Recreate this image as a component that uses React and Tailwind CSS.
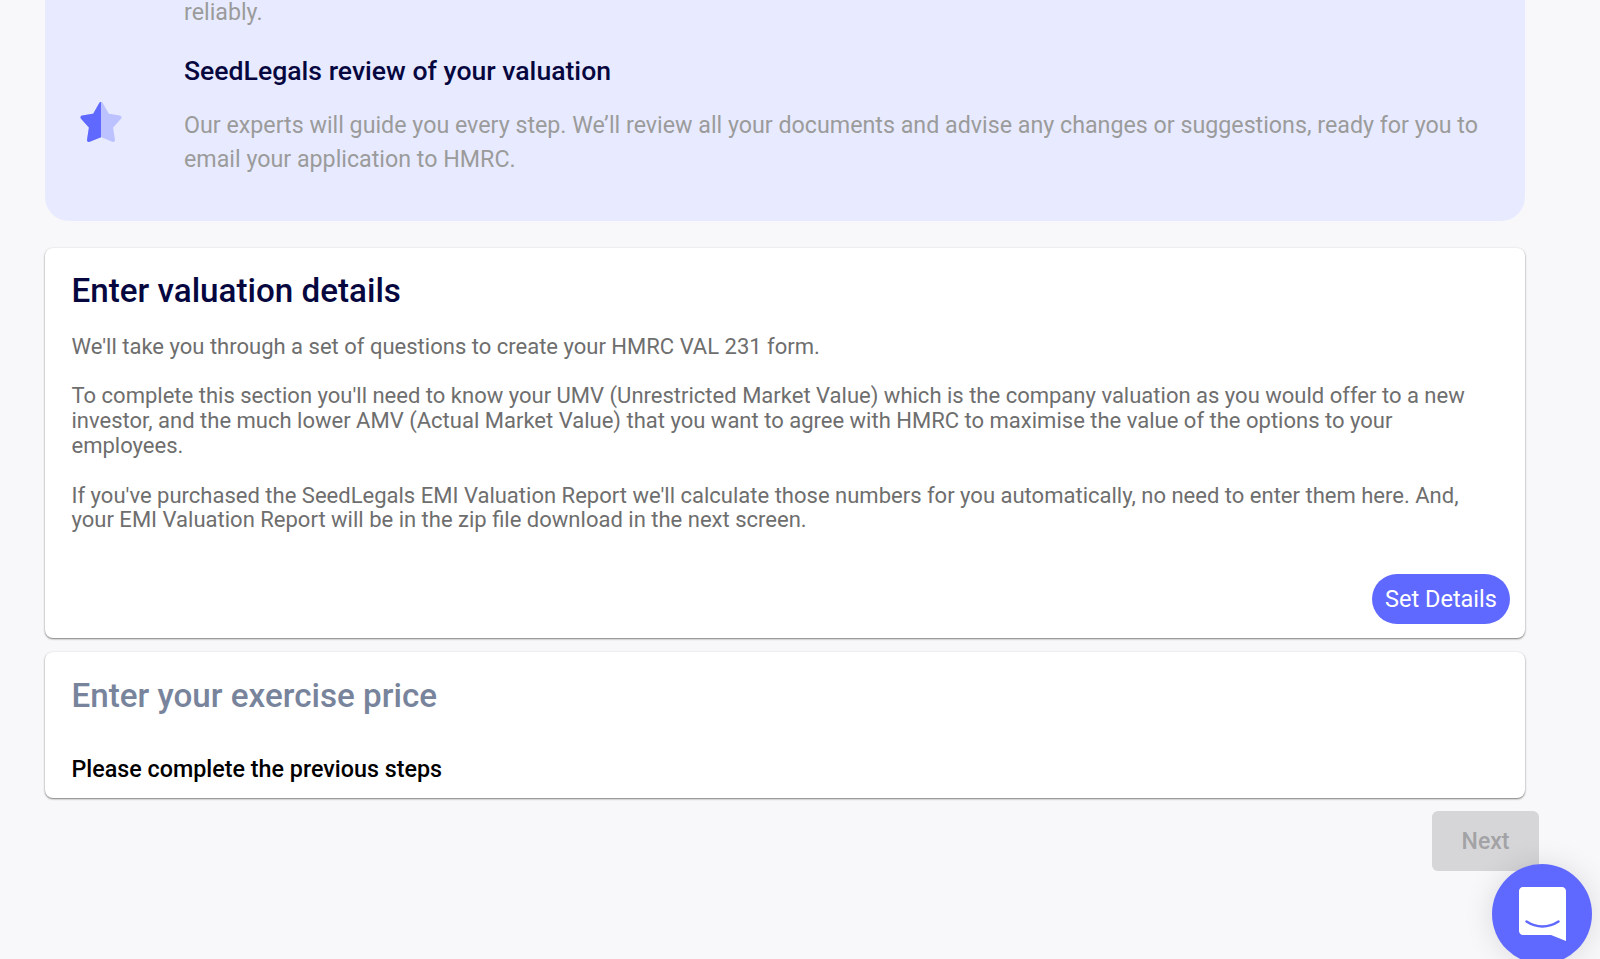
import React from 'react';

const STAR = 'M21 2L14.500 13.500L2.500 15.500L11 25L9 38L21 33L33 38L31 25L39.500 15.500L27.500 13.500Z';

function StarIcon() {
  return (
    <svg width="42" height="42" viewBox="0 0 42 42">
      <defs>
        <clipPath id="star-left"><rect x="0" y="0" width="21" height="42" /></clipPath>
      </defs>
      <path d={STAR} fill="#bcc1ff" stroke="#bcc1ff" strokeWidth="4" strokeLinejoin="round" />
      <path d={STAR} fill="#6069ff" stroke="#6069ff" strokeWidth="4" strokeLinejoin="round" clipPath="url(#star-left)" />
    </svg>
  );
}

function ChatIcon() {
  return (
    <svg width="47" height="54" viewBox="0 0 47 54">
      <path d="M4 0h39c2.200 0 4 1.800 4 4v50l-15-6H4c-2.200 0-4-1.800-4-4V4c0-2.200 1.800-4 4-4z" fill="#fff" />
      <path d="M7.500 34.500c10 6.500 22 6.500 32 0" fill="none" stroke="#6069ff" strokeWidth="2.500" strokeLinecap="round" />
    </svg>
  );
}

export default function App() {
  return (
    <div className="relative h-[959px] overflow-hidden bg-[#f8f8fa] font-['Roboto',sans-serif]">
      <div className="-mt-[40px] w-[1480px] ml-[45px]">
        <div className="bg-[#e8ebff] rounded-b-[24px] pl-[139px] pr-[40px] pt-[35px] pb-[45px] relative">
          <p className="text-[23.240px] leading-[34px] text-[#9b9b9b]">reliably.</p>
          <h3 className="mt-[23px] text-[26.600px] leading-[38px] font-medium text-[#07073f]">SeedLegals review of your valuation</h3>
          <p className="mt-[18px] text-[23.240px] leading-[34px] text-[#9b9b9b]">
            Our experts will guide you every step. We’ll review all your documents and advise any changes or suggestions, ready for you to email your application to HMRC.
          </p>
          <div className="absolute left-[35px] top-[142px]"><StarIcon /></div>
        </div>

        <div className="mt-[26.500px] bg-white rounded-[8px] shadow-[0_1px_2px_rgba(0,0,0,0.5),0_0_3px_rgba(0,0,0,0.04)] pl-[26.500px] pr-[15px] pt-[21px] pb-[14.500px]">
          <h2 className="text-[33.200px] leading-[44px] font-medium text-[#07073f]">Enter valuation details</h2>
          <div className="mt-[22px] pr-[30px] text-[22.030px] leading-[24.900px] text-[#6e6e6e]">
            <p>We'll take you through a set of questions to create your HMRC VAL 231 form.</p>
            <p className="mt-[24.700px]">To complete this section you'll need to know your UMV (Unrestricted Market Value) which is the company valuation as you would offer to a new investor, and the much lower AMV (Actual Market Value) that you want to agree with HMRC to maximise the value of the options to your employees.</p>
            <p className="mt-[24.700px]">If you've purchased the SeedLegals EMI Valuation Report we'll calculate those numbers for you automatically, no need to enter them here. And, your EMI Valuation Report will be in the zip file download in the next screen.</p>
          </div>
          <div className="mt-[40.500px] flex justify-end">
            <button className="h-[50px] w-[138px] rounded-full bg-[#6069ff] pt-[1px] text-white text-[23.500px]">Set Details</button>
          </div>
        </div>

        <div className="mt-[13.500px] h-[146px] bg-white rounded-[8px] shadow-[0_1px_2px_rgba(0,0,0,0.5),0_0_3px_rgba(0,0,0,0.04)] pl-[26.500px] pt-[22px]">
          <h2 className="text-[33.200px] leading-[44px] font-medium text-[#78849c]">Enter your exercise price</h2>
          <p className="mt-[36px] text-[23.300px] leading-[30px] font-medium text-black">Please complete the previous steps</p>
        </div>

        <div className="mt-[13.500px] flex justify-end -mr-[14px]">
          <button className="h-[60px] w-[107px] rounded-[6px] bg-[#d6d6d9] pt-[2px] text-[#a3a3a5] text-[23px] font-medium">Next</button>
        </div>
      </div>

      <div className="absolute left-[1492px] top-[864px] size-[100px] rounded-full bg-[#6069ff] flex items-center justify-center shadow-[0_1px_30px_rgba(0,0,0,0.12)]">
        <ChatIcon />
      </div>
    </div>
  );
}
